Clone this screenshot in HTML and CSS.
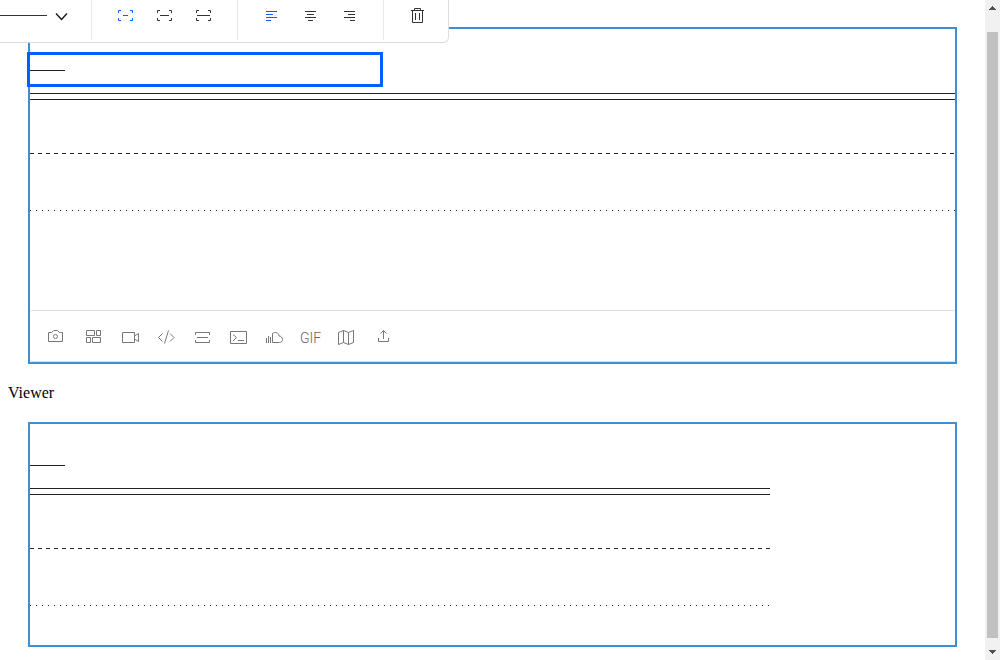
FILE: index.html
```
<!DOCTYPE html>
<html lang="en">
<head>
<meta charset="utf-8">
<title>Editor</title>
<link rel="stylesheet" href="styles.css">
</head>
<body>
<main class="page">
  <section class="panel" aria-label="Editor">
    <div class="content">
      <div class="block selected"><hr class="rule short"></div>
      <hr class="rule double">
      <hr class="rule dashed">
      <hr class="rule dotted">
    </div>
    <div class="footer" role="toolbar" aria-label="Insert">
      <button type="button" aria-label="Image"><svg width="36" height="24"><path d="M11.5 8.5h3l2-2h4l2 2h3v9h-14z"/><circle cx="18.500" cy="12.500" r="2"/></svg></button>
      <button type="button" aria-label="Gallery"><svg width="36" height="24"><path d="M13.5 6.5h8v5h-8zM23.5 6.5h4v5h-4zM13.5 13.5h4v5h-4zM19.5 13.5h8v5h-8z"/></svg></button>
      <button type="button" aria-label="Video"><svg width="36" height="24"><path d="M13.5 8.5h12v10h-12zM25.5 12l4-2.5v8l-4-2.5"/></svg></button>
      <button type="button" aria-label="HTML"><svg width="36" height="24"><path d="M17.5 9.5l-4 4 4 4M23.5 6.5l-4 13M25 9.5l4 4-4 4"/></svg></button>
      <button type="button" aria-label="Divider"><svg width="36" height="24"><path d="M14.5 11V8.5h14V11M16 13.5h11M14.5 16v2.5h14V16"/></svg></button>
      <button type="button" aria-label="Code block"><svg width="36" height="24"><path d="M13.5 7.5h16v12h-16zM16 10.5l3.5 3-3.5 3.5M21 16.5h6"/></svg></button>
      <button type="button" aria-label="Sound"><svg width="36" height="24"><path d="M13.5 14v5M15.5 12v7M17.5 13v6M19.5 18.5v-9c3-2 6-1 6.5 2.5 2 0 3.5 1.5 3.5 3.5 0 2-1.5 3-3 3z"/></svg></button>
      <button type="button" class="gif">GIF</button>
      <button type="button" aria-label="Map"><svg width="36" height="24"><path d="M13.5 8.5l5-2 5 2 5-2v12l-5 2-5-2-5 2zM18.5 6.5v12M23.5 8.5v12"/></svg></button>
      <button type="button" aria-label="Upload"><svg width="36" height="24"><path d="M17.5 14v3.5h10V14M22.5 15V6.5M19.5 9.5l3-3 3 3"/></svg></button>
    </div>
  </section>
  <p class="label">Viewer</p>
  <section class="panel" aria-label="Viewer">
    <div class="content viewer">
      <div class="block"><hr class="rule short"></div>
      <hr class="rule double">
      <hr class="rule dashed">
      <hr class="rule dotted">
    </div>
  </section>
  <div class="toolbar" role="toolbar" aria-label="Divider formatting">
    <div class="group style">
      <button type="button" aria-label="Line style"><svg width="91" height="19"><path d="M0 9.5h47"/><path class="chevron" d="M56 7.5l5.5 6L67 7.5"/></svg></button>
    </div>
    <div class="group">
      <button type="button" class="active" aria-label="Small"><svg width="19" height="19"><path d="M2.5 7V4.5H5M14 4.5h2.5V7M2.5 12v2.5H5M14 14.5h2.5V12M7 9.5h5"/></svg></button>
      <button type="button" aria-label="Medium"><svg width="19" height="19"><path d="M2.5 7V4.5H5M14 4.5h2.5V7M2.5 12v2.5H5M14 14.5h2.5V12M5 9.5h9"/></svg></button>
      <button type="button" aria-label="Large"><svg width="19" height="19"><path d="M2.5 7V4.5H5M14 4.5h2.5V7M2.5 12v2.5H5M14 14.5h2.5V12M3 9.5h13"/></svg></button>
    </div>
    <div class="group">
      <button type="button" class="active" aria-label="Align left"><svg width="19" height="19"><path d="M4 5.5h11M4 8.5h7M4 11.5h11M4 14.5h5"/></svg></button>
      <button type="button" aria-label="Align center"><svg width="19" height="19"><path d="M4 5.5h11M6 8.5h7M4 11.5h11M7 14.5h5"/></svg></button>
      <button type="button" aria-label="Align right"><svg width="19" height="19"><path d="M4 5.5h11M8 8.5h7M4 11.5h11M10 14.5h5"/></svg></button>
    </div>
    <div class="group last">
      <button type="button" aria-label="Delete"><svg width="19" height="19"><path d="M3 4.5h13M6.5 4.5v-2h6v2M4.5 4.5v12h10v-12M7.5 7v7M11.5 7v7"/></svg></button>
    </div>
  </div>
</main>
<div class="scrollbar" aria-hidden="true">
  <svg class="arrow" width="7" height="4"><path d="M3 0h1v1h1v1h1v1h1v1H0V3h1V2h1V1h1z"/></svg>
  <div class="thumb"></div>
  <svg class="arrow" width="7" height="4"><path d="M0 0h7v1H6v1H5v1H4v1H3V3H2V2H1V1H0z"/></svg>
</div>
</body>
</html>
```
FILE: styles.css
```
* { box-sizing: border-box; }

body {
  margin: 0;
  display: flex;
  background: #fff;
  color: #000;
  font: 16px/18px "Liberation Serif", serif;
}

.page {
  flex: 1;
  min-width: 0;
  padding: 27px 8px 8px;
}

.panel {
  margin: 0 20px;
  border: 2px solid #3d8fd4;
}

.label { margin: 20px 0; }

.content { padding: 26px 0 99px; }

.viewer {
  max-width: 740px;
  padding-bottom: 39px;
}

.block {
  width: 350px;
  max-width: 100%;
  height: 29px;
  margin-bottom: 9px;
  padding-top: 15px;
}

.selected { outline: 3px solid #0061ff; }

.rule {
  height: 1px;
  margin: 0;
  border: 0;
  background: #222;
}

.short { width: 35px; }

.double {
  height: 7px;
  border: solid #222;
  border-width: 1px 0;
  background: none;
}

.dashed {
  margin-top: 53px;
  background: repeating-linear-gradient(to right, #222 0 4px, transparent 4px 8px);
}

.dotted {
  margin-top: 56px;
  background: repeating-linear-gradient(to right, #222 0 1px, transparent 1px 6px);
}

button {
  display: flex;
  align-items: center;
  justify-content: center;
  margin: 0;
  padding: 0;
  border: 0;
  background: none;
  color: inherit;
}

button svg {
  display: block;
  fill: none;
  stroke: currentColor;
}

.footer {
  display: flex;
  height: 52px;
  padding-left: 7px;
  border: solid #ddd;
  border-width: 1px 0;
  border-radius: 2px;
  color: #777;
}

.footer button { width: 36px; }

.footer .gif {
  padding: 3px 0 0 7px;
  color: #666;
  font: 300 14px/24px Roboto, sans-serif;
}

.toolbar {
  position: absolute;
  top: 0;
  left: 0;
  display: flex;
  height: 43px;
  padding-bottom: 2px;
  border: solid #ddd;
  border-width: 0 1px 1px 0;
  border-bottom-right-radius: 6px;
  background: #fff;
  color: #333;
}

.group {
  display: flex;
  padding: 0 14px;
  border-right: 1px solid #eaeaea;
}

.group button {
  width: 39px;
  height: 31px;
}

.style { padding: 0; }

.style button { width: 91px; }

.last {
  padding-right: 11px;
  border: 0;
}

.active { color: #0061ff; }

.chevron {
  stroke: #111;
  stroke-width: 1.3;
}

.scrollbar {
  position: sticky;
  top: 0;
  display: flex;
  flex-direction: column;
  align-items: center;
  width: 15px;
  height: 100vh;
  padding: 6px 0;
  background: #f1f1f1;
}

.arrow { fill: #505050; }

.thumb {
  flex: 1;
  width: 11px;
  margin: 22px 0 12px;
  background: #c1c1c1;
}
```
